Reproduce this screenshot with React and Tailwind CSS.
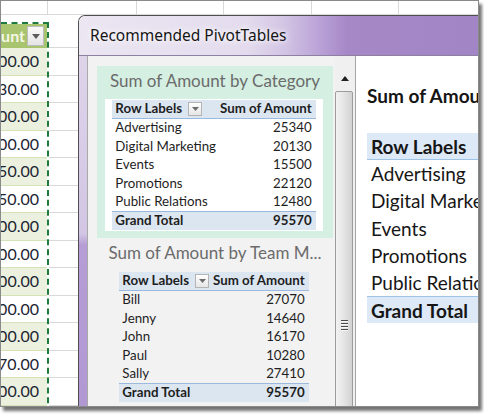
import React from "react";

const sheetValues = [
  "1,200.00", "1,230.00", "3,400.00", "2,100.00", "1,850.00", "950.00", "2,300.00",
  "1,500.00", "4,000.00", "2,600.00", "1,900.00", "870.00", "3,200.00", "1,100.00",
];

const byCategory = [
  ["Advertising", "25340"],
  ["Digital Marketing", "20130"],
  ["Events", "15500"],
  ["Promotions", "22120"],
  ["Public Relations", "12480"],
];

const byMember = [
  ["Bill", "27070"],
  ["Jenny", "14640"],
  ["John", "16170"],
  ["Paul", "10280"],
  ["Sally", "27410"],
];

function FilterButton() {
  return (
    <span className="ml-[6px] flex h-[14px] w-[14px] items-center justify-center border border-[#b4b4b4] bg-[linear-gradient(180deg,#ffffff,#e6e6e6)]">
      <svg width="7" height="4" viewBox="0 0 7 4">
        <polygon points="0,0 7,0 3.5,4" fill="#6d6d6d" />
      </svg>
    </span>
  );
}

function MiniPivot({ rows, total }) {
  const cell = "h-[18.5px] flex items-center";
  return (
    <div className="inline-grid grid-cols-[auto_auto] text-[13.3px] leading-none text-[#1e1e1e]">
      <div className={`${cell} bg-[#dce6f1] border-b border-[#9bb9dc] pl-[3px] font-bold`}>
        Row Labels
        <FilterButton />
      </div>
      <div className={`${cell} bg-[#dce6f1] border-b border-[#9bb9dc] justify-end pl-[4px] pr-[4px] font-bold`}>
        Sum of Amount
      </div>
      {rows.map(([label, value]) => (
        <React.Fragment key={label}>
          <div className={`${cell} pl-[3px]`}>{label}</div>
          <div className={`${cell} justify-end pr-[4px]`}>{value}</div>
        </React.Fragment>
      ))}
      <div className={`${cell} bg-[#dce6f1] border-t border-[#9bb9dc] pl-[3px] font-bold`}>Grand Total</div>
      <div className={`${cell} bg-[#dce6f1] border-t border-[#9bb9dc] justify-end pr-[4px] font-bold`}>{total}</div>
    </div>
  );
}

function ExcelSheet() {
  return (
    <div className="flex flex-col">
      <div className="flex h-[14px] border-b border-[#d9d9d9]">
        <div className="w-[47px] border-r border-[#d9d9d9]" />
        <div className="w-[89px] border-r border-[#d9d9d9]" />
        <div className="w-[87px] border-r border-[#d9d9d9]" />
        <div className="w-[88px] border-r border-[#d9d9d9]" />
        <div className="w-[87px] border-r border-[#d9d9d9]" />
      </div>
      <div className="h-[7px]" />
      <div className="flex">
        <div className="w-[48px] border-t-2 border-r-2 border-dashed border-[#1f7a3d]">
          <div className="flex h-[24px] items-center overflow-hidden bg-[#a8c46f]">
            <div className="flex w-[25px] shrink-0 justify-end overflow-hidden pr-[1px] text-[16px] font-bold text-[#f4f6e6]">
              <span className="whitespace-nowrap">Amount</span>
            </div>
            <div className="ml-[1px] flex h-[20px] w-[17px] items-center justify-center border border-[#bcbcbc] bg-[linear-gradient(180deg,#fafafa,#e4e4e4)]">
              <svg width="8" height="5" viewBox="0 0 8 5">
                <polygon points="0,0 8,0 4,5" fill="#5b5b5b" />
              </svg>
            </div>
          </div>
          {sheetValues.map((v, i) => (
            <div
              key={i}
              className={`flex h-[27.5px] items-center justify-end overflow-hidden border-b border-[#d3e2b7] pr-[8px] text-[16px] text-[#1d2433] ${i % 2 === 0 ? "bg-[#ebf1de]" : "bg-white"}`}
            >
              <span className="whitespace-nowrap">{v}</span>
            </div>
          ))}
        </div>
        <div className="flex flex-1 flex-col">
          <div className="h-[26px] border-b border-[#d9d9d9]" />
          {sheetValues.map((v, i) => (
            <div key={i} className="h-[27.5px] border-b border-[#d9d9d9]" />
          ))}
        </div>
      </div>
    </div>
  );
}

function Scrollbar() {
  return (
    <div className="flex h-full w-[20px] shrink-0 flex-col bg-[#f0f0f0]">
      <div className="flex h-[35px] shrink-0 justify-center pt-[20px] pr-[1px]">
        <svg width="8" height="5" viewBox="0 0 8 5">
          <polygon points="0,5 8,5 4,0" fill="#202020" />
        </svg>
      </div>
      <div className="mr-[2px] flex flex-1 flex-col items-center rounded-t-[2px] border border-[#9c9c9c] bg-[linear-gradient(90deg,#f2f2f2,#e4e4e4_50%,#d2d2d2)] pt-[228px]">
        <div className="flex flex-col gap-[1px]">
          <div className="h-[2px] w-[7px] border-t border-[#4a4a4a] bg-[#f7f7f7]" />
          <div className="h-[2px] w-[7px] border-t border-[#4a4a4a] bg-[#f7f7f7]" />
          <div className="h-[2px] w-[7px] border-t border-[#4a4a4a] bg-[#f7f7f7]" />
          <div className="h-[2px] w-[7px] border-t border-[#4a4a4a] bg-[#f7f7f7]" />
        </div>
      </div>
    </div>
  );
}

function BigPivot() {
  const rows = ["Advertising", "Digital Marketing", "Events", "Promotions", "Public Relations"];
  return (
    <div className="w-[300px] text-[19px] leading-none text-[#161616]">
      <div className="flex h-[27px] items-center border-b border-[#9dc3e6] bg-[#dde9f6] pl-[4px] font-bold">Row Labels</div>
      {rows.map((r) => (
        <div key={r} className="flex h-[27.3px] items-center whitespace-nowrap pl-[4px]">
          {r}
        </div>
      ))}
      <div className="flex h-[27px] items-center border-t border-[#9dc3e6] bg-[#dde9f6] pl-[4px] font-bold">Grand Total</div>
    </div>
  );
}

function Dialog() {
  return (
    <div className="absolute left-[77px] top-[14px] w-[440px] overflow-hidden rounded-tl-[7px] border-l border-t border-[#4f4f4f] bg-[#f1f1f1]">
      <div className="flex h-[40px] items-center border-b border-[#8d80a3] bg-[linear-gradient(90deg,#ebe6f2_0%,#e4dcee_38%,#d2c4e4_47%,#b9a1d6_55%,#a688c7_61%,#a084c3_100%)] pl-[11px] font-['Noto_Sans',sans-serif] text-[15.5px] text-[#151515]">
        <span className="[text-shadow:0_0_8px_#ffffff,0_0_4px_#ffffff]">Recommended PivotTables</span>
      </div>
      <div className="flex h-[370px]">
        <div className="w-[8px] shrink-0 bg-[linear-gradient(180deg,#ddd4ea_0%,#d2c6e4_48%,#b69dd5_51%,#b198d3_100%)]" />
        <div className="flex min-w-0 flex-1 border-l border-[#a9a9a9] bg-[#f1f1f1]">
          <div className="flex h-full w-[247px] shrink-0 flex-col bg-[#f2f2f2] pl-[9px] pt-[10px]">
            <div className="flex h-[172px] w-[236px] shrink-0 flex-col bg-[#d5efe2]">
              <div className="flex h-[33px] shrink-0 items-center justify-center pb-[4px] text-[17px] text-[#6b6b6b]">
                Sum of Amount by Category
              </div>
              <div className="ml-[8px] flex w-[218px] justify-center bg-white py-[1px]">
                <MiniPivot rows={byCategory} total="95570" />
              </div>
            </div>
            <div className="flex w-[236px] flex-col">
              <div className="flex h-[34px] shrink-0 items-center justify-center pb-[4px] text-[17px] text-[#6b6b6b]">
                Sum of Amount by Team M...
              </div>
              <div className="ml-[8px] flex w-[218px] justify-center">
                <MiniPivot rows={byMember} total="95570" />
              </div>
            </div>
          </div>
          <Scrollbar />
          <div className="h-full min-w-0 flex-1 overflow-hidden border-l border-[#a4a4a4] bg-white pl-[11px]">
            <div className="mt-[28px] flex h-[24px] items-center whitespace-nowrap text-[19px] font-bold text-[#151515]">
              Sum of Amount by Category
            </div>
            <div className="mt-[25px]">
              <BigPivot />
            </div>
          </div>
        </div>
      </div>
    </div>
  );
}

export default function App() {
  return (
    <div className="h-[414px] w-[484px] bg-white font-['Lato',sans-serif]">
      <div className="relative h-[407px] w-[479px] overflow-hidden border border-[#8a8a8a] bg-white shadow-[3px_4px_3px_rgba(0,0,0,0.55)]">
        <ExcelSheet />
        <Dialog />
      </div>
    </div>
  );
}
